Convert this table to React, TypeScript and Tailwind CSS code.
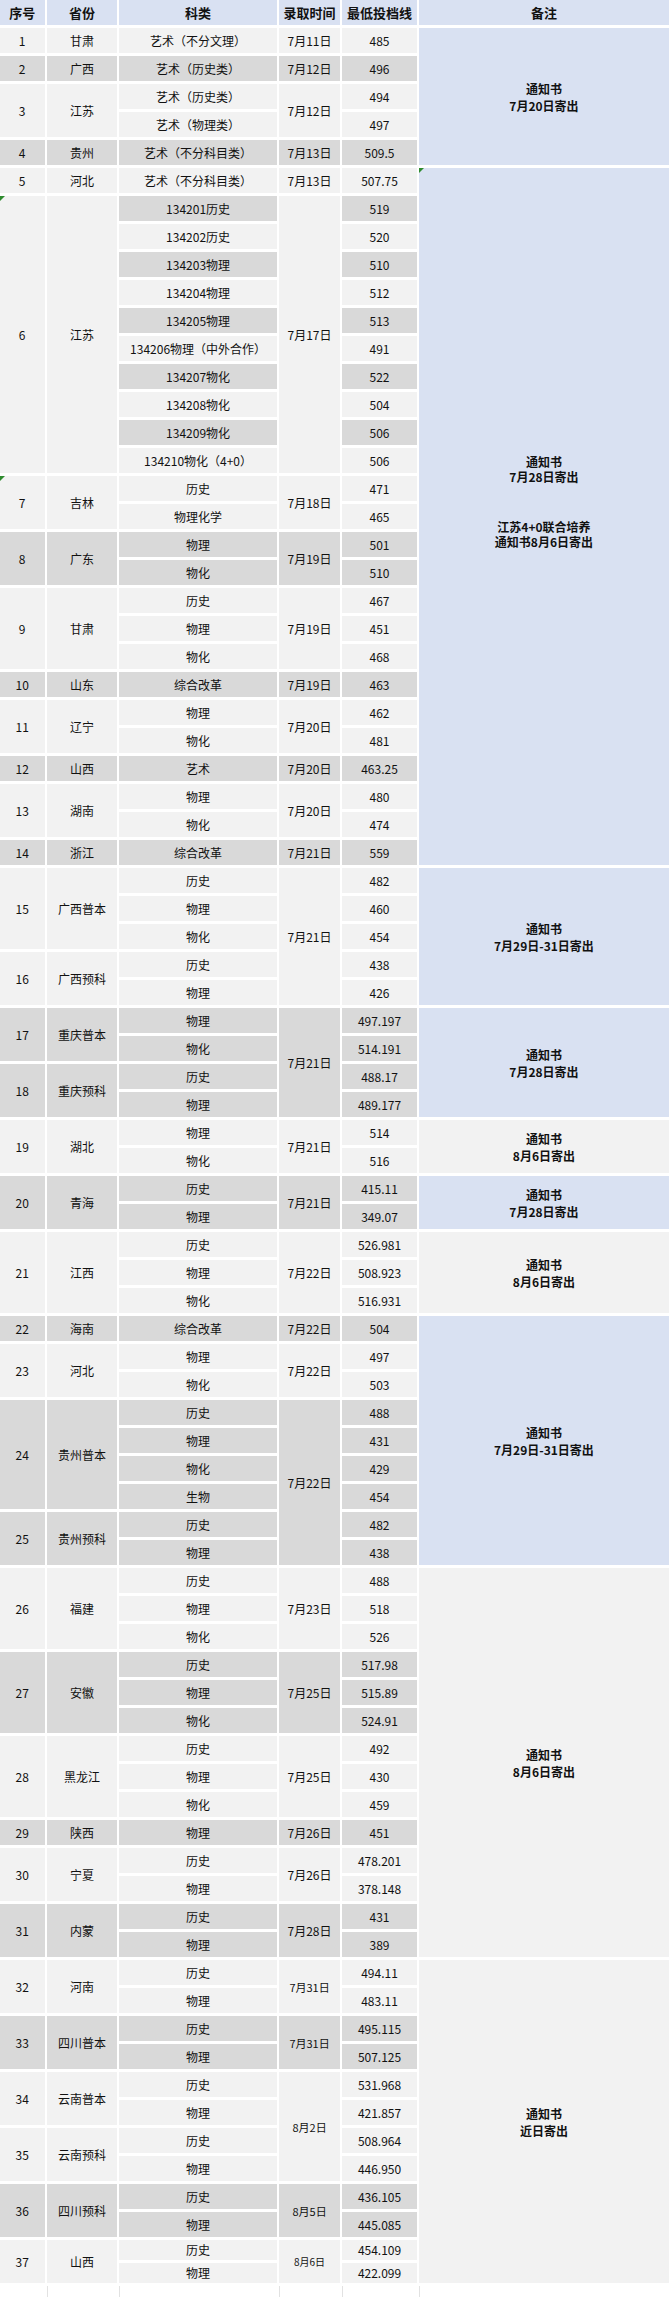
import React from 'react';

type Row = {
  no: number;
  prov: string;
  dark?: boolean;
  alt?: boolean;
  items: [string, string][];
  date?: string;
  dateRows?: number;
  small?: boolean;
  tiny?: boolean;
  mark?: boolean;
};

type Note = { rows: number; blue: boolean; lines: string[]; special?: boolean };

const rows: Row[] = [
  { no: 1, prov: '甘肃', items: [['艺术（不分文理）', '485']], date: '7月11日' },
  { no: 2, prov: '广西', dark: true, items: [['艺术（历史类）', '496']], date: '7月12日' },
  { no: 3, prov: '江苏', items: [['艺术（历史类）', '494'], ['艺术（物理类）', '497']], date: '7月12日' },
  { no: 4, prov: '贵州', dark: true, items: [['艺术（不分科目类）', '509.5']], date: '7月13日' },
  { no: 5, prov: '河北', items: [['艺术（不分科目类）', '507.75']], date: '7月13日' },
  {
    no: 6,
    prov: '江苏',
    alt: true,
    mark: true,
    items: [
      ['134201历史', '519'],
      ['134202历史', '520'],
      ['134203物理', '510'],
      ['134204物理', '512'],
      ['134205物理', '513'],
      ['134206物理（中外合作）', '491'],
      ['134207物化', '522'],
      ['134208物化', '504'],
      ['134209物化', '506'],
      ['134210物化（4+0）', '506'],
    ],
    date: '7月17日',
  },
  { no: 7, prov: '吉林', mark: true, items: [['历史', '471'], ['物理化学', '465']], date: '7月18日' },
  { no: 8, prov: '广东', dark: true, items: [['物理', '501'], ['物化', '510']], date: '7月19日' },
  { no: 9, prov: '甘肃', items: [['历史', '467'], ['物理', '451'], ['物化', '468']], date: '7月19日' },
  { no: 10, prov: '山东', dark: true, items: [['综合改革', '463']], date: '7月19日' },
  { no: 11, prov: '辽宁', items: [['物理', '462'], ['物化', '481']], date: '7月20日' },
  { no: 12, prov: '山西', dark: true, items: [['艺术', '463.25']], date: '7月20日' },
  { no: 13, prov: '湖南', items: [['物理', '480'], ['物化', '474']], date: '7月20日' },
  { no: 14, prov: '浙江', dark: true, items: [['综合改革', '559']], date: '7月21日' },
  { no: 15, prov: '广西普本', items: [['历史', '482'], ['物理', '460'], ['物化', '454']], date: '7月21日', dateRows: 2 },
  { no: 16, prov: '广西预科', items: [['历史', '438'], ['物理', '426']] },
  { no: 17, prov: '重庆普本', dark: true, items: [['物理', '497.197'], ['物化', '514.191']], date: '7月21日', dateRows: 2 },
  { no: 18, prov: '重庆预科', dark: true, items: [['历史', '488.17'], ['物理', '489.177']] },
  { no: 19, prov: '湖北', items: [['物理', '514'], ['物化', '516']], date: '7月21日' },
  { no: 20, prov: '青海', dark: true, items: [['历史', '415.11'], ['物理', '349.07']], date: '7月21日' },
  { no: 21, prov: '江西', items: [['历史', '526.981'], ['物理', '508.923'], ['物化', '516.931']], date: '7月22日' },
  { no: 22, prov: '海南', dark: true, items: [['综合改革', '504']], date: '7月22日' },
  { no: 23, prov: '河北', items: [['物理', '497'], ['物化', '503']], date: '7月22日' },
  {
    no: 24,
    prov: '贵州普本',
    dark: true,
    items: [['历史', '488'], ['物理', '431'], ['物化', '429'], ['生物', '454']],
    date: '7月22日',
    dateRows: 2,
  },
  { no: 25, prov: '贵州预科', dark: true, items: [['历史', '482'], ['物理', '438']] },
  { no: 26, prov: '福建', items: [['历史', '488'], ['物理', '518'], ['物化', '526']], date: '7月23日' },
  { no: 27, prov: '安徽', dark: true, items: [['历史', '517.98'], ['物理', '515.89'], ['物化', '524.91']], date: '7月25日' },
  { no: 28, prov: '黑龙江', items: [['历史', '492'], ['物理', '430'], ['物化', '459']], date: '7月25日' },
  { no: 29, prov: '陕西', dark: true, items: [['物理', '451']], date: '7月26日' },
  { no: 30, prov: '宁夏', items: [['历史', '478.201'], ['物理', '378.148']], date: '7月26日' },
  { no: 31, prov: '内蒙', dark: true, items: [['历史', '431'], ['物理', '389']], date: '7月28日' },
  { no: 32, prov: '河南', items: [['历史', '494.11'], ['物理', '483.11']], date: '7月31日', small: true },
  { no: 33, prov: '四川普本', dark: true, items: [['历史', '495.115'], ['物理', '507.125']], date: '7月31日', small: true },
  { no: 34, prov: '云南普本', items: [['历史', '531.968'], ['物理', '421.857']], date: '8月2日', dateRows: 2, small: true },
  { no: 35, prov: '云南预科', items: [['历史', '508.964'], ['物理', '446.950']] },
  { no: 36, prov: '四川预科', dark: true, items: [['历史', '436.105'], ['物理', '445.085']], date: '8月5日', small: true },
  { no: 37, prov: '山西', items: [['历史', '454.109'], ['物理', '422.099']], date: '8月6日', tiny: true },
];

const notes: Note[] = [
  { rows: 4, blue: true, lines: ['通知书', '7月20日寄出'] },
  { rows: 10, blue: true, lines: [], special: true },
  { rows: 2, blue: true, lines: ['通知书', '7月29日-31日寄出'] },
  { rows: 2, blue: true, lines: ['通知书', '7月28日寄出'] },
  { rows: 1, blue: false, lines: ['通知书', '8月6日寄出'] },
  { rows: 1, blue: true, lines: ['通知书', '7月28日寄出'] },
  { rows: 1, blue: false, lines: ['通知书', '8月6日寄出'] },
  { rows: 4, blue: true, lines: ['通知书', '7月29日-31日寄出'] },
  { rows: 6, blue: false, lines: ['通知书', '8月6日寄出'] },
  { rows: 6, blue: false, lines: ['通知书', '近日寄出'] },
];

const LIGHT = 'bg-[#f2f2f2]';
const DARK = 'bg-[#d9d9d9]';
const BLUE = 'bg-[#d9e1f2]';

const subCount = (from: number, n: number) =>
  rows.slice(from, from + n).reduce((a, r) => a + r.items.length, 0);

const Mark = () => (
  <span className="absolute left-0 top-0 h-0 w-0 border-t-[5px] border-r-[5px] border-t-[#2e8b2e] border-r-transparent" />
);

export default function App() {
  const noteAt: Record<number, Note> = {};
  let acc = 0;
  notes.forEach((n) => {
    noteAt[acc] = n;
    acc += n.rows;
  });

  const trs: React.ReactNode[] = [];
  rows.forEach((r, i) => {
    const bg = r.dark ? DARK : LIGHT;
    const h = r.no === 37 ? 'h-[20px]' : 'h-[25px]';
    r.items.forEach(([subj, score], j) => {
      const subBg = r.alt ? (j % 2 === 0 ? DARK : LIGHT) : bg;
      const note = j === 0 ? noteAt[i] : undefined;
      trs.push(
        <tr key={`${r.no}-${j}`} className={h}>
          {j === 0 && (
            <td rowSpan={r.items.length} className={`relative ${bg}`}>
              {r.mark && <Mark />}
              {r.no}
            </td>
          )}
          {j === 0 && (
            <td rowSpan={r.items.length} className={bg}>
              {r.prov}
            </td>
          )}
          <td className={subBg}>{subj}</td>
          {j === 0 && r.date && (
            <td
              rowSpan={subCount(i, r.dateRows ?? 1)}
              className={`${bg} ${r.tiny ? 'text-[10px]' : r.small ? 'text-[11px]' : ''}`}
            >
              {r.date}
            </td>
          )}
          <td className={subBg}>{score}</td>
          {note && (
            <td
              rowSpan={subCount(i, note.rows)}
              className={`relative font-bold leading-[17px] ${note.blue ? BLUE : LIGHT}`}
            >
              {note.special ? (
                <>
                  <Mark />
                  <div className="flex flex-col items-center pb-[30px] leading-[15px]">
                    <span>通知书</span>
                    <span>7月28日寄出</span>
                    <span className="mt-[35px]">江苏4+0联合培养</span>
                    <span>通知书8月6日寄出</span>
                  </div>
                </>
              ) : (
                <div className="flex flex-col items-center">
                  {note.lines.map((l) => (
                    <span key={l}>{l}</span>
                  ))}
                </div>
              )}
            </td>
          )}
        </tr>
      );
    });
  });

  return (
    <div className="h-[2297px] w-[671px] overflow-hidden bg-white font-['Noto_Sans_CJK_SC',sans-serif] text-[#111]">
      <table className="ml-[-2.33px] mt-[-3px] border-separate border-spacing-x-[2.33px] border-spacing-y-[3px] whitespace-nowrap text-center text-[12px] leading-[16px] [&_td]:p-0 [&_td]:align-middle">
        <thead>
          <tr className="h-[25px] text-[13px] font-bold">
            <td className={`w-[45px] ${BLUE}`}>序号</td>
            <td className={`w-[70.67px] ${BLUE}`}>省份</td>
            <td className={`w-[157.67px] ${BLUE}`}>科类</td>
            <td className={`w-[61.33px] ${BLUE}`}>录取时间</td>
            <td className={`w-[74.67px] ${BLUE}`}>最低投档线</td>
            <td className={`w-[250.33px] ${BLUE}`}>备注</td>
          </tr>
        </thead>
        <tbody>
          {trs}
          <tr className="h-[20px]">
            <td className="bg-white" />
            <td className="border-l border-[#e2e2e2] bg-white" />
            <td className="border-l border-[#e2e2e2] bg-white" />
            <td className="border-l border-[#e2e2e2] bg-white" />
            <td className="border-l border-[#e2e2e2] bg-white" />
            <td className="border-l border-[#e2e2e2] bg-white" />
          </tr>
        </tbody>
      </table>
    </div>
  );
}
